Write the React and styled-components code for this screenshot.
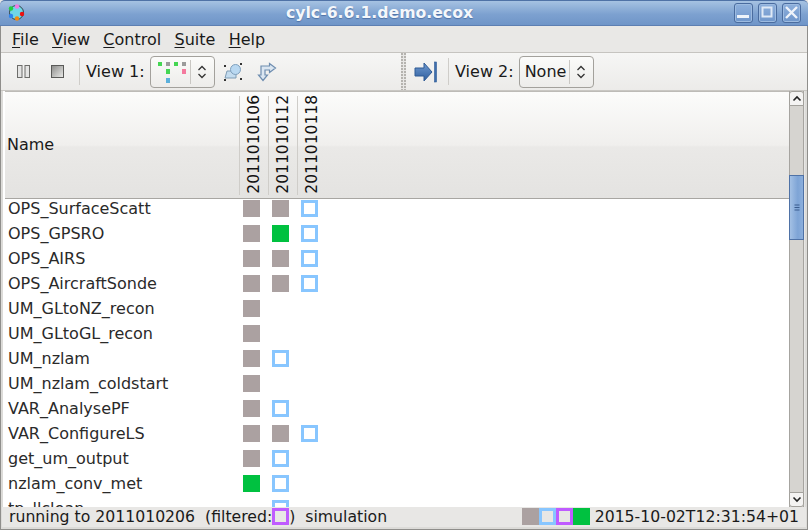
import React from 'react';
import styled, { createGlobalStyle } from 'styled-components';

const Global = createGlobalStyle`
  html, body { margin: 0; padding: 0; background: #e8e7e5; }
  #root { width: 808px; height: 530px; overflow: hidden; }
`;

const Win = styled.div`
  width: 808px; height: 530px; box-sizing: border-box; display: flex; flex-direction: column;
  font-family: "DejaVu Sans", sans-serif; font-size: 16px; color: #1a1a1a; background: #e8e7e5; overflow: hidden;
`;
const TitleBar = styled.div`
  height: 26px; flex: none; box-sizing: border-box; display: flex; align-items: center; padding: 0 7px 1px 8px;
  background: linear-gradient(#a6c2e2, #7da1d0 55%, #6f95c8); border-top: 1px solid #4f72a6; border-bottom: 1px solid #5d7fb2;
  border-radius: 5px 5px 0 0;
`;
const TitleText = styled.div`
  flex: 1; text-align: center; font-weight: bold; font-size: 15.7px; color: #f4f7fb;
  text-shadow: 0 1px 1px #4f72a6; line-height: 24px;
`;
const WinButtons = styled.div`display: flex; gap: 5px;`;
const WinButton = styled.div`
  width: 19px; height: 20px; box-sizing: border-box; border: 1px solid #4a6c9f; border-radius: 3px;
  background: linear-gradient(#8eb0dc, #6f96cb); display: flex; align-items: center; justify-content: center;
  box-shadow: inset 0 0 0 1px #9dbbe0;
`;
const Frame = styled.div`
  flex: 1; min-height: 0; display: flex; flex-direction: column; border: solid #8f8e8b; border-width: 0 1px 1px;
  box-shadow: inset 2px 0 0 #dcdbd8, inset -2px 0 0 #dcdbd8, inset 0 -2px 0 #dcdbd8;
  padding: 0 2px 2px;
`;
const MenuBar = styled.div`
  height: 27px; flex: none; box-sizing: border-box; display: flex; gap: 13.3px; align-items: center; padding: 1px 0 0 11px;
  background: #e9e8e6; border-bottom: 1px solid #c6c4c0; margin: 0 -2px;
`;
const MenuItem = styled.span`
  line-height: 18px;
  u { text-underline-offset: 2px; text-decoration-thickness: 1px; }
`;
const Toolbar = styled.div`
  height: 38px; flex: none; box-sizing: border-box; display: flex; margin: 0 -2px;
  background: linear-gradient(#f6f6f5, #ecebe9); border-bottom: 1px solid #c9c7c3;
`;
const ToolGroup = styled.div`
  display: flex; align-items: center; height: 37px; box-sizing: content-box; padding-bottom: 0;
  padding-left: ${p => p.$pad}px; width: ${p => p.$w}px; flex: none;
`;
const Handle = styled.div`
  width: 5px; flex: none; height: 37px;
  background: radial-gradient(circle at 1px 1px, #b5b3af 0.8px, transparent 1px) 0 0 / 3px 3px, #e8e7e5;
`;
const IconSlot = styled.div`
  width: ${p => p.$w || 26}px; height: 26px; display: flex; align-items: center; justify-content: center; flex: none;
`;
const Sep = styled.div`
  width: 1px; height: 27px; background: #cfcdc9; margin: 0 ${p => p.$r}px 0 ${p => p.$l}px; flex: none;
`;
const Label = styled.span`white-space: pre; flex: none;`;
const Combo = styled.div`
  height: 32px; box-sizing: border-box; display: flex; align-items: center; border: 1px solid #a3a19c; border-radius: 4px;
  background: linear-gradient(#fbfbfa, #edecea); margin-left: ${p => p.$ml}px; width: ${p => p.$w}px; flex: none;
  padding-left: ${p => p.$pl || 0}px;
`;
const ComboMain = styled.div`flex: 1; display: flex; align-items: center; height: 100%;`;
const ComboDivider = styled.div`width: 1px; height: 24px; background: #c9c7c3; flex: none;`;
const ComboArrow = styled.div`width: 23px; display: flex; justify-content: center; flex: none;`;
const Content = styled.div`flex: 1; min-height: 0; display: flex; background: #fff; padding-left: 1px; margin-right: 1px;`;
const TreeView = styled.div`flex: 1; min-width: 0; display: flex; flex-direction: column; overflow: hidden;`;
const Header = styled.div`
  height: 108px; flex: none; box-sizing: border-box; display: flex; border-bottom: 1px solid #a8a6a2; border-top: 1px solid #bdbbb7;
  background: linear-gradient(#fcfcfb, #f0efed 50%, #eae9e7 52%, #e4e3e1); margin-left: 1px;
`;
const NameHead = styled.div`
  width: 234px; flex: none; display: flex; align-items: center; padding: 0 0 2px 2px; box-sizing: border-box;
`;
const DateHead = styled.div`
  width: 29px; flex: none; box-sizing: border-box; display: flex; align-items: flex-end; justify-content: center;
  padding: 0 0 1px 0; margin-top: 4px; margin-bottom: 3px;
  border-left: 1px solid #cfcdc9;
`;
const DateText = styled.span`
  writing-mode: vertical-rl; transform: rotate(180deg); line-height: 17px; color: #111; font-size: 15.5px;
`;
const Rows = styled.div`flex: 1; min-height: 0; display: flex; flex-direction: column; gap: 8px; padding: 1px 0 0 4px; overflow: hidden;`;
const Row = styled.div`display: flex; height: 17px; flex: none; align-items: center;`;
const RowName = styled.div`width: 235px; flex: none; color: #2a2a2a; line-height: 17px; white-space: nowrap;`;
const Cells = styled.div`display: flex; gap: 12px;`;
const COLORS = { done: ['#aba1a1', '#aba1a1'], run: ['#00c140', '#00c140'], wait: ['#88c6ff', 'transparent'], held: ['#bf5bff', 'transparent'] };
const Square = styled.div`
  width: 17px; height: 17px; box-sizing: border-box; flex: none;
  border: 3px solid ${p => COLORS[p.$k][0]};
  background: ${p => COLORS[p.$k][1]};
`;
const Blank = styled.div`width: 17px; height: 17px; flex: none;`;
const ScrollBar = styled.div`
  width: 15px; flex: none; box-sizing: border-box; display: flex; flex-direction: column; background: #d6d4d0;
  box-shadow: inset 1px 0 0 #a6a4a0, inset -1px 0 0 #a6a4a0;
`;
const ScrollBtn = styled.div`
  height: 15px; flex: none; box-sizing: border-box; background: #f4f3f2; border: 1px solid #a3a19c;
  border-radius: ${p => p.$down ? '0 0 3px 3px' : '3px 3px 0 0'};
  display: flex; align-items: center; justify-content: center;
`;
const Thumb = styled.div`
  height: 65px; flex: none; margin-top: 69px; box-sizing: border-box; border: 1px solid #4f72a6;
  background: linear-gradient(90deg, #a3c0e4, #7ea4d6 60%, #8cafdc); display: flex; align-items: center; justify-content: center;
`;
const Trough = styled.div`flex: 1;`;
const StatusBar = styled.div`
  height: 20px; flex: none; box-sizing: border-box; display: flex; align-items: center; background: #e8e7e5; padding: 0 7px 2px 7px; margin: 0 -1px;
  color: #1a1a1a; font-size: 15.7px;
`;
const Grow = styled.div`flex: 1;`;
const Legend = styled.div`display: flex; margin-right: 5px;`;
const BarDiv = styled.div`display: flex; align-items: center;`;

const AppIcon = () => (
  <svg width="17" height="17" viewBox="0 0 17 17">
    <circle cx="8.5" cy="8.5" r="7" fill="#6fd6e6" stroke="#222" strokeWidth="0.8" />
    <circle cx="3" cy="4.5" r="2.2" fill="#20d040" />
    <circle cx="9" cy="2.5" r="2.2" fill="#f07ae0" />
    <circle cx="3" cy="12" r="2.2" fill="#2c84f0" />
    <circle cx="14" cy="10" r="2.2" fill="#ee1010" />
    <circle cx="9" cy="14.5" r="2.2" fill="#f08a10" />
  </svg>
);
const MinIcon = () => <svg width="15" height="15" viewBox="0 0 15 15"><rect x="1" y="10" width="12" height="3" fill="#eef3fa" /></svg>;
const MaxIcon = () => <svg width="15" height="15" viewBox="0 0 15 15"><rect x="2.5" y="2.5" width="9" height="9" fill="none" stroke="#dfe9f6" strokeWidth="2" /></svg>;
const CloseIcon = () => <svg width="15" height="15" viewBox="0 0 15 15"><path d="M2 2L13 13M13 2L2 13" stroke="#eef3fa" strokeWidth="2.4" /></svg>;
const PauseIcon = () => (
  <svg width="13" height="13" viewBox="0 0 13 13">
    <rect x="0.5" y="0.5" width="4.5" height="12" fill="#e4e4e3" stroke="#6d6d6a" />
    <rect x="8" y="0.5" width="4.5" height="12" fill="#e4e4e3" stroke="#6d6d6a" />
  </svg>
);
const StopIcon = () => (
  <svg width="13" height="13" viewBox="0 0 13 13">
    <defs><linearGradient id="st" x1="0" y1="0" x2="1" y2="1"><stop offset="0" stopColor="#8a8a88" /><stop offset="1" stopColor="#ececea" /></linearGradient></defs>
    <rect x="0.5" y="0.5" width="12" height="12" fill="url(#st)" stroke="#5a5a58" />
  </svg>
);
const DotGridSvg = styled.svg`margin-left: 7px;`;
const DotGrid = () => (
  <DotGridSvg width="28" height="24" viewBox="0 0 28 24">
    <rect x="0" y="2" width="4" height="4" fill="#45d653" />
    <rect x="8" y="2" width="4" height="4" fill="#9b9b9b" />
    <rect x="16" y="2" width="4" height="4" fill="#45d653" />
    <rect x="24" y="2" width="4" height="4" fill="#9b9b9b" />
    <rect x="8" y="9" width="4" height="5" fill="#45d653" />
    <rect x="24" y="9" width="4" height="5" fill="#f47a9e" />
    <rect x="8" y="18" width="4" height="5" fill="#5bb0dc" />
  </DotGridSvg>
);
const UpDown = () => (
  <svg width="10" height="16" viewBox="0 0 10 16">
    <path d="M1.5 6L5 2.5L8.5 6M1.5 10L5 13.5L8.5 10" fill="none" stroke="#333" strokeWidth="1.3" />
  </svg>
);
const GroupIcon = () => (
  <svg width="20" height="20" viewBox="0 0 20 20">
    <path d="M4 9H13V16H2Z" fill="#c4dcef" stroke="#7f9cb5" />
    <circle cx="12.5" cy="7.5" r="5" fill="#b9d8f1" stroke="#7f9fbc" />
    <g fill="#333">
      <rect x="1" y="3" width="2" height="2" /><rect x="17" y="1" width="2" height="2" />
      <rect x="1" y="17" width="2" height="2" /><rect x="17" y="16" width="2" height="2" />
    </g>
  </svg>
);
const TurnIcon = () => (
  <svg width="20" height="20" viewBox="0 0 20 20">
    <path d="M12.5 1.5L18.5 6L12.5 10.5V8H8V13H10.5L6 18.5L1.5 13H4V4H12.5Z" fill="#dbe6f1" stroke="#6f8eb0" strokeWidth="1.2" />
  </svg>
);
const ArrowBar = () => (
  <svg width="24" height="22" viewBox="0 0 24 22">
    <defs><linearGradient id="ab" x1="0" y1="0" x2="0" y2="1"><stop offset="0" stopColor="#6f9ad0" /><stop offset="1" stopColor="#2f5e9e" /></linearGradient></defs>
    <path d="M1 7H10V2L18 11L10 20V15H1Z" fill="url(#ab)" stroke="#2f5a94" />
    <rect x="20.5" y="1" width="2" height="20" fill="#3e6fae" stroke="#2f5a94" strokeWidth="0.6" />
  </svg>
);
const Chevron = ({ down }) => (
  <svg width="10" height="7" viewBox="0 0 10 7">
    <path d={down ? 'M1.5 1.5L5 5L8.5 1.5' : 'M1.5 5.5L5 2L8.5 5.5'} fill="none" stroke="#222" strokeWidth="1.6" />
  </svg>
);
const Grip = () => (
  <svg width="7" height="7" viewBox="0 0 7 7"><path d="M1.5 1H6.5M1.5 3.5H6.5M1.5 6H6.5" stroke="#3b5d8f" /></svg>
);

const rows = [
  ['OPS_SurfaceScatt', 'done', 'done', 'wait'],
  ['OPS_GPSRO', 'done', 'run', 'wait'],
  ['OPS_AIRS', 'done', 'done', 'wait'],
  ['OPS_AircraftSonde', 'done', 'done', 'wait'],
  ['UM_GLtoNZ_recon', 'done'],
  ['UM_GLtoGL_recon', 'done'],
  ['UM_nzlam', 'done', 'wait'],
  ['UM_nzlam_coldstart', 'done'],
  ['VAR_AnalysePF', 'done', 'wait'],
  ['VAR_ConfigureLS', 'done', 'done', 'wait'],
  ['get_um_output', 'done', 'wait'],
  ['nzlam_conv_met', 'run', 'wait'],
  ['tp_llclean', null, 'wait'],
];

export default function App() {
  return (
    <>
      <Global />
      <Win>
        <TitleBar>
          <AppIcon />
          <TitleText>cylc-6.6.1.demo.ecox</TitleText>
          <WinButtons>
            <WinButton><MinIcon /></WinButton>
            <WinButton><MaxIcon /></WinButton>
            <WinButton><CloseIcon /></WinButton>
          </WinButtons>
        </TitleBar>
        <Frame>
          <MenuBar>
            <MenuItem><u>F</u>ile</MenuItem>
            <MenuItem><u>V</u>iew</MenuItem>
            <MenuItem><u>C</u>ontrol</MenuItem>
            <MenuItem><u>S</u>uite</MenuItem>
            <MenuItem><u>H</u>elp</MenuItem>
          </MenuBar>
          <Toolbar>
            <ToolGroup $pad={9} $w={391}>
              <IconSlot><PauseIcon /></IconSlot>
              <IconSlot $w={42}><StopIcon /></IconSlot>
              <Sep $l={1} $r={6} />
              <Label>View 1:</Label>
              <Combo $ml={5} $w={65}>
                <ComboMain><DotGrid /></ComboMain>
                <ComboDivider />
                <ComboArrow><UpDown /></ComboArrow>
              </Combo>
              <IconSlot $w={37}><GroupIcon /></IconSlot>
              <IconSlot $w={30}><TurnIcon /></IconSlot>
            </ToolGroup>
            <Handle />
            <ToolGroup $pad={8} $w={390}>
              <IconSlot $w={24}><ArrowBar /></IconSlot>
              <Sep $l={10} $r={6} />
              <Label>View 2:</Label>
              <Combo $ml={5} $w={75} $pl={5}>
                <ComboMain>None</ComboMain>
                <ComboDivider />
                <ComboArrow><UpDown /></ComboArrow>
              </Combo>
            </ToolGroup>
          </Toolbar>
          <Content>
            <TreeView>
              <Header>
                <NameHead>Name</NameHead>
                <DateHead><DateText>2011010106</DateText></DateHead>
                <DateHead><DateText>2011010112</DateText></DateHead>
                <DateHead><DateText>2011010118</DateText></DateHead>
              </Header>
              <Rows>
                {rows.map(([name, ...cells]) => (
                  <Row key={name}>
                    <RowName>{name}</RowName>
                    <Cells>
                      {cells.map((c, i) => (c ? <Square key={i} $k={c} /> : <Blank key={i} />))}
                    </Cells>
                  </Row>
                ))}
              </Rows>
            </TreeView>
            <ScrollBar>
              <ScrollBtn><Chevron /></ScrollBtn>
              <Thumb><Grip /></Thumb>
              <Trough />
              <ScrollBtn $down><Chevron down /></ScrollBtn>
            </ScrollBar>
          </Content>
          <StatusBar>
            <BarDiv>
              <Label>running to 2011010206  (filtered:</Label>
              <Square $k="held" />
              <Label>)  simulation</Label>
            </BarDiv>
            <Grow />
            <Legend>
              <Square $k="done" />
              <Square $k="wait" />
              <Square $k="held" />
              <Square $k="run" />
            </Legend>
            <Label>2015-10-02T12:31:54+01</Label>
          </StatusBar>
        </Frame>
      </Win>
    </>
  );
}
